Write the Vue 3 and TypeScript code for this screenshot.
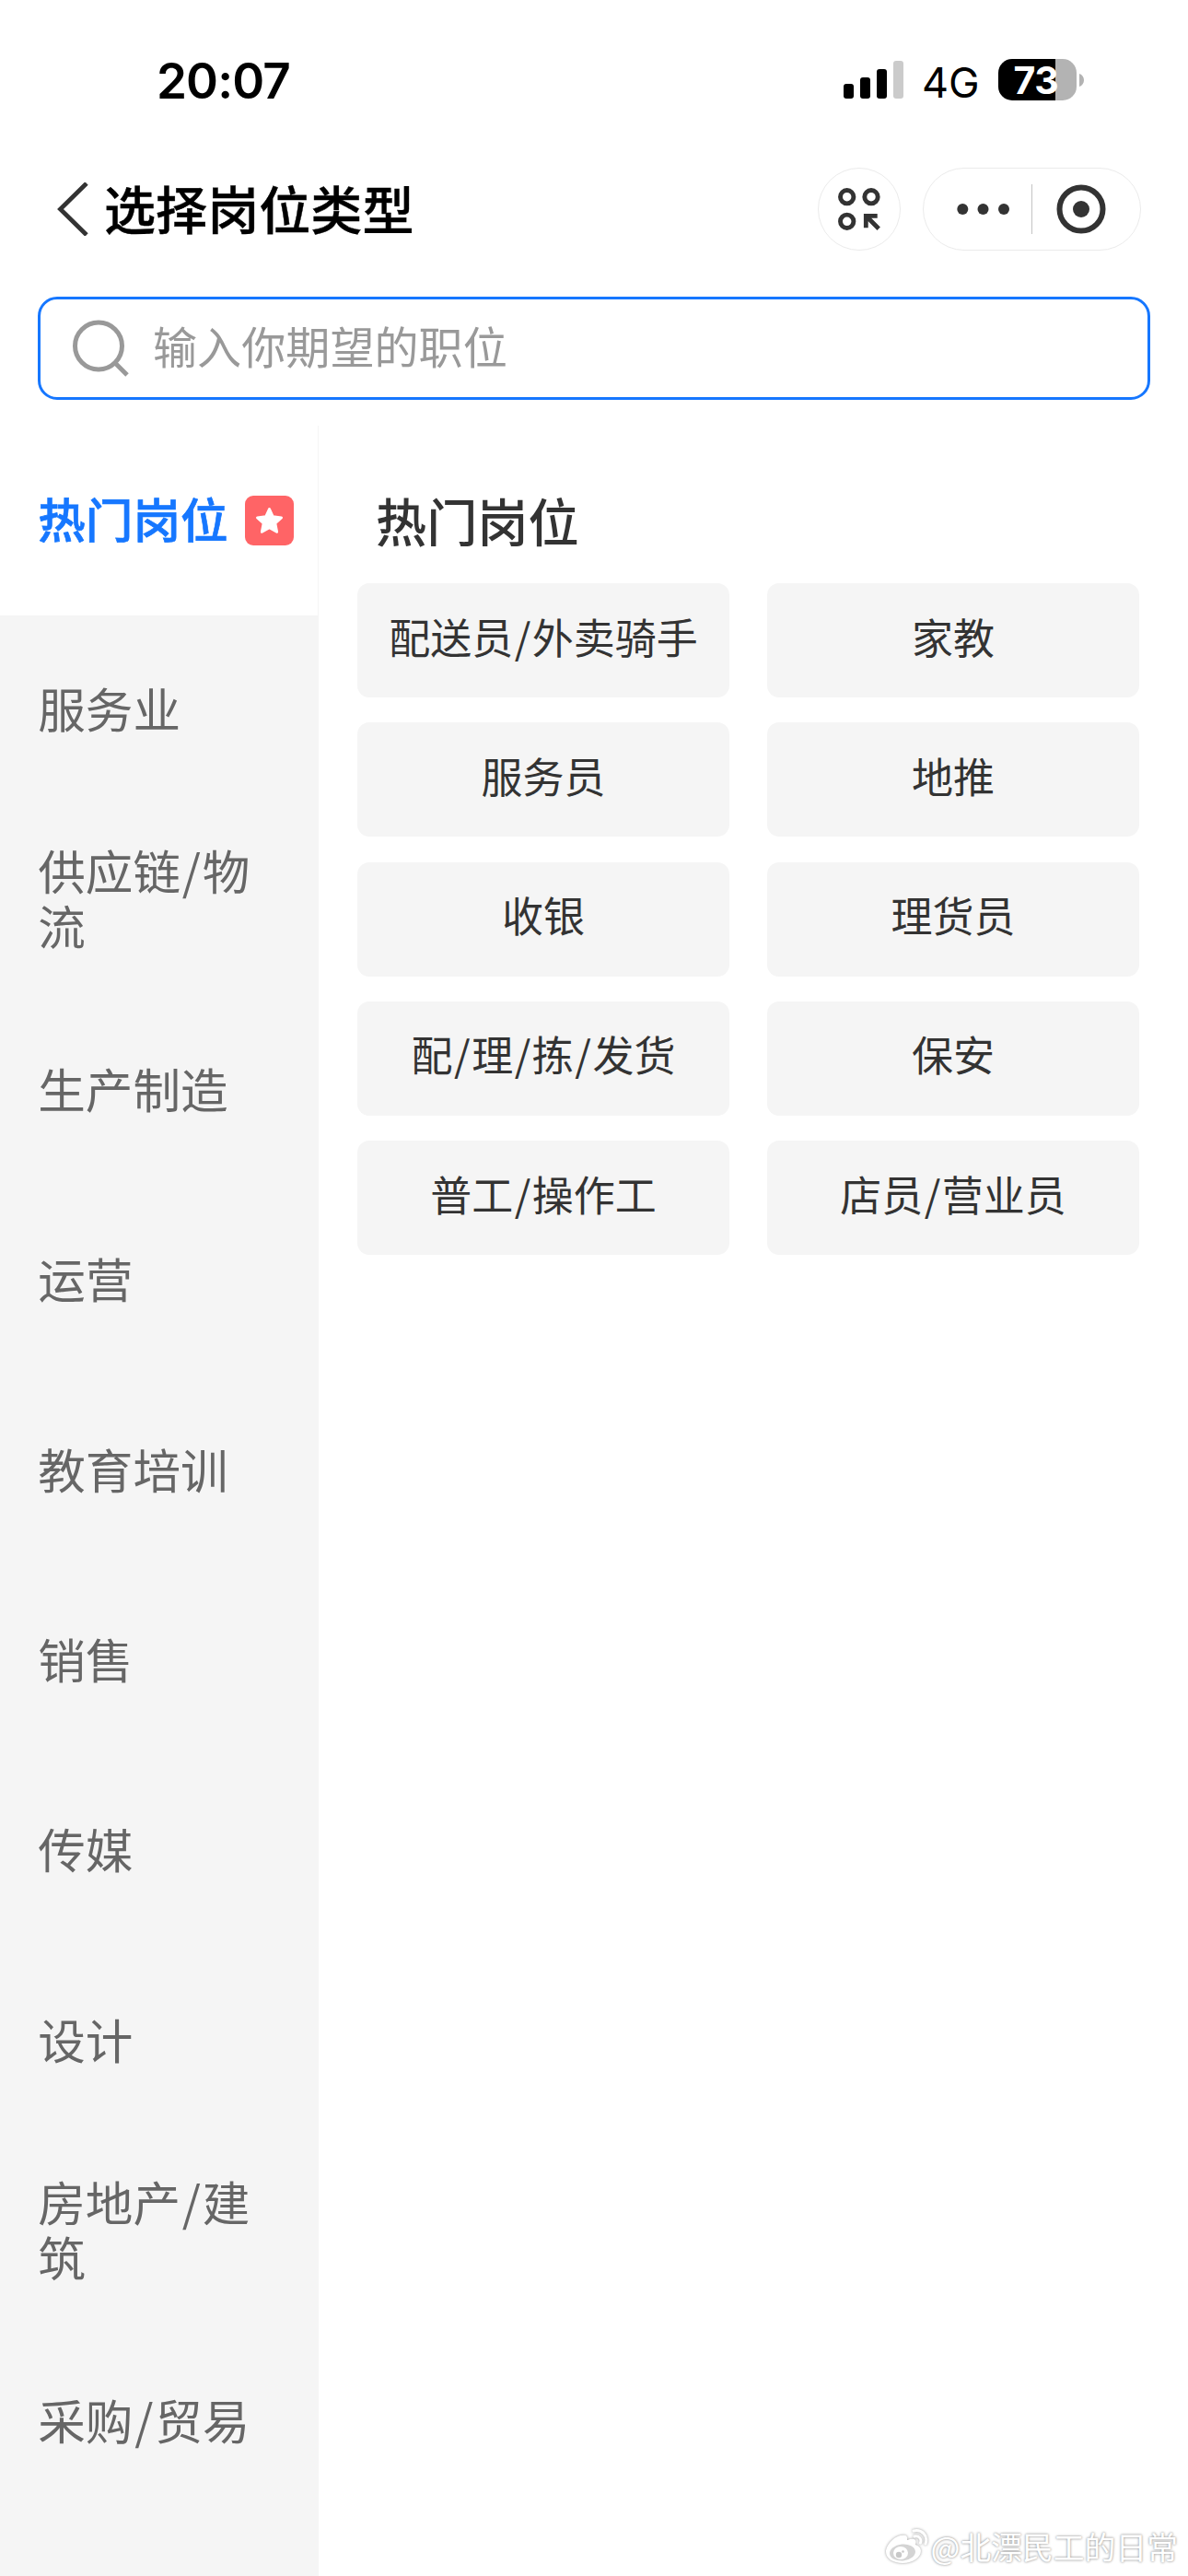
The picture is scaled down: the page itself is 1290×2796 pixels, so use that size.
<script setup lang="ts">
import { ref } from 'vue'

interface Category {
  name: string
  hot?: boolean
}

const categories: Category[] = [
  { name: '热门岗位', hot: true },
  { name: '服务业' },
  { name: '供应链/物流' },
  { name: '生产制造' },
  { name: '运营' },
  { name: '教育培训' },
  { name: '销售' },
  { name: '传媒' },
  { name: '设计' },
  { name: '房地产/建筑' },
  { name: '采购/贸易' },
]

const jobs: string[] = [
  '配送员/外卖骑手',
  '家教',
  '服务员',
  '地推',
  '收银',
  '理货员',
  '配/理/拣/发货',
  '保安',
  '普工/操作工',
  '店员/营业员',
]

const active = ref(0)

// Keeps slashes as separate parts so they can get a little extra room.
const parts = (text: string): string[] => text.split(/(\/)/)
</script>

<template>
  <div class="page">
    <header class="status">
      <span class="time">20:07</span>
      <div class="indicators">
        <svg class="signal" width="65" height="41" viewBox="0 0 65 41">
          <rect x="0" y="25" width="11" height="16" rx="3" />
          <rect x="18" y="18" width="11" height="23" rx="3" />
          <rect x="36" y="9" width="11" height="32" rx="3" />
          <rect x="54" y="0" width="11" height="41" rx="3" fill="#cbcbcb" />
        </svg>
        <span class="network">4G</span>
        <div class="battery">
          <div class="cell"><span>73</span></div>
          <svg width="5" height="14" viewBox="0 0 5 14">
            <path d="M0 0C3.2 1 5 3.700 5 7S3.200 13 0 14Z" fill="#b3b3b3" />
          </svg>
        </div>
      </div>
    </header>

    <nav class="navbar">
      <svg class="back" width="35" height="58" viewBox="0 0 35 58">
        <path d="M33 1L4.500 29L33 57" fill="none" stroke="#333" stroke-width="4.800" />
      </svg>
      <h1>选择岗位类型</h1>
      <div class="round-button">
        <svg width="48" height="48" viewBox="0 0 48 48" fill="none" stroke="#333">
          <circle cx="10.700" cy="10.700" r="7.200" stroke-width="4.900" />
          <circle cx="37" cy="10.700" r="7.200" stroke-width="4.900" />
          <circle cx="10.700" cy="37.300" r="7.200" stroke-width="4.900" />
          <path d="M31.300 44.300V31.300H43.700M31.300 31.300L45.200 45.200" stroke-width="4.800" />
        </svg>
      </div>
      <div class="capsule">
        <svg width="235" height="88" viewBox="0 0 235 88" fill="#333">
          <circle cx="42.300" cy="44" r="6" />
          <circle cx="64.500" cy="44" r="6" />
          <circle cx="87" cy="44" r="6" />
          <rect x="117" y="17" width="1" height="54" fill="#c4c4c4" />
          <circle cx="171" cy="44" r="23.500" fill="none" stroke="#333" stroke-width="6" />
          <circle cx="171" cy="44" r="9" />
        </svg>
      </div>
    </nav>

    <div class="search">
      <svg width="64" height="64" viewBox="0 0 64 64" fill="none" stroke="#999" stroke-width="5">
        <circle cx="30" cy="29.500" r="25.500" />
        <path d="M47 47L61 61" />
      </svg>
      <span>输入你期望的职位</span>
    </div>

    <main class="content">
      <aside class="sidebar">
        <div
          v-for="(category, i) in categories"
          :key="category.name"
          class="category"
          :class="{ active: i === active }"
          @click="active = i"
        >
          <span class="label"
            ><template v-for="(part, p) in parts(category.name)" :key="p"
              ><span v-if="part === '/'" class="slash">/</span
              ><template v-else>{{ part }}</template></template
            ></span
          >
          <svg v-if="category.hot" class="badge" width="53" height="54" viewBox="0 0 53 54">
            <rect width="53" height="54" rx="9" fill="#ff6466" />
            <path
              d="M26.500 14.500L30.300 22.800L39.500 23.900L32.800 30L34.600 39.200L26.500 34.800L18.400 39.200L20.200 30L13.500 23.900L22.700 22.800Z"
              fill="#fff"
              stroke="#fff"
              stroke-width="3"
              stroke-linejoin="round"
            />
          </svg>
        </div>
      </aside>
      <section class="panel">
        <h2>热门岗位</h2>
        <div class="jobs">
          <div v-for="job in jobs" :key="job" class="job">
            <span class="label"
              ><template v-for="(part, p) in parts(job)" :key="p"
                ><span v-if="part === '/'" class="slash">/</span
                ><template v-else>{{ part }}</template></template
              ></span
            >
          </div>
        </div>
      </section>
    </main>

    <div class="watermark">
      <svg width="48" height="40" viewBox="0 0 48 40">
        <path
          d="M18 8C11 8 1 18 1 26C1 33 9 38 19 38C31 38 39 31 39 25C39 21 36 19 33 18C35 13 32 10 24 13C25 9 23 7 18 8Z"
          fill="#fff"
        />
        <ellipse cx="19" cy="26.500" rx="14" ry="9" fill="#d4d4d4" transform="rotate(-6 19 26.500)" />
        <ellipse cx="17" cy="27" rx="8" ry="7" fill="#fff" />
        <circle cx="15" cy="29" r="3.200" fill="#c8c8c8" />
        <circle cx="19.500" cy="25.500" r="1.300" fill="#c8c8c8" />
        <path
          d="M31 3C40 1 47 8 44 17M32 9C37 8 40 12 38.500 16"
          fill="none"
          stroke="#fff"
          stroke-width="3"
          stroke-linecap="round"
        />
      </svg>
      <span>@北漂民工的日常</span>
    </div>
  </div>
</template>

<style>
body {
  margin: 0;
  background: #fff;
}
</style>

<style scoped>
.page {
  position: relative;
  display: flex;
  flex-direction: column;
  box-sizing: border-box;
  width: 1290px;
  height: 2796px;
  overflow: hidden;
  background: #fff;
  color: #333;
  font-family: 'Noto Sans CJK SC', sans-serif;
}

.status {
  display: flex;
  justify-content: space-between;
  box-sizing: border-box;
  height: 182px;
  padding: 64px 113px 0 170px;
  color: #000;
  font-family: Inter, sans-serif;
}

.time {
  height: 48px;
  font-size: 53px;
  font-weight: 600;
  line-height: 48px;
  letter-spacing: -0.9px;
}

.indicators {
  display: flex;
  align-items: flex-start;
}

.signal {
  margin-top: 2px;
}

.network {
  width: 103px;
  padding-left: 20px;
  box-sizing: border-box;
  font-size: 45px;
  font-weight: 400;
  line-height: 51px;
  white-space: nowrap;
}

.battery {
  display: flex;
  align-items: center;
  gap: 3px;
}

.cell {
  display: flex;
  align-items: flex-start;
  justify-content: center;
  width: 85px;
  height: 45px;
  border-radius: 15px;
  background: linear-gradient(to right, #000 62px, #b3b3b3 62px);
  color: #fff;
  font-size: 41px;
  font-weight: 700;
  line-height: 46px;
  letter-spacing: -0.4px;
}

.cell span {
  margin-right: 3px;
}

.navbar {
  display: flex;
  align-items: center;
  height: 90px;
  padding: 0 51px 0 61px;
}

.back {
  margin-right: 17px;
}

h1 {
  flex: 1;
  margin: 0;
  padding-bottom: 4px;
  font-size: 56.1px;
  font-weight: 500;
  line-height: 86px;
  color: #000;
  -webkit-text-stroke: 0.4px #000;
}

.round-button,
.capsule {
  display: flex;
  align-items: center;
  justify-content: center;
  box-sizing: border-box;
  height: 90px;
  border: 1px solid #ebebeb;
  border-radius: 45px;
}

.round-button {
  width: 90px;
  margin-right: 24px;
}

.capsule {
  width: 237px;
}

.search {
  display: flex;
  align-items: center;
  box-sizing: border-box;
  height: 112px;
  margin: 50px 41px 28px;
  padding-left: 33px;
  border: 3px solid #1677ff;
  border-radius: 21px;
  color: #999;
  font-size: 48.100px;
  line-height: 70px;
}

.search span {
  margin-left: 25px;
  padding-bottom: 8px;
}

.content {
  display: flex;
  flex: 1;
}

.sidebar {
  box-sizing: border-box;
  width: 346px;
  border-right: 1px solid #f5f5f5;
  background: #f5f5f5;
}

.category {
  display: flex;
  align-items: center;
  box-sizing: border-box;
  height: 206.4px;
  padding: 0 43px 0 41.200px;
  color: #666;
  font-size: 51.6px;
  line-height: 60.2px;
}

.category .label {
  padding-bottom: 7px;
}

.slash {
  display: inline-block;
  padding: 0 0.034em;
  line-height: 1;
}

.category.active {
  padding-right: 0;
  background: #fff;
  color: #1677ff;
  font-weight: 500;
  -webkit-text-stroke: 0.7px #1677ff;
}

.badge {
  margin-left: 18px;
}

.panel {
  flex: 1;
  padding: 65px 53px 0 42px;
}

h2 {
  margin: 0;
  padding: 0 20px;
  font-size: 55.2px;
  font-weight: 500;
  line-height: 74px;
  height: 106px;
  box-sizing: border-box;
}

.jobs {
  display: grid;
  grid-template-columns: 404px 404px;
  grid-auto-rows: 124px;
  gap: 27.3px 41px;
}

.job {
  display: flex;
  align-items: center;
  justify-content: center;
  border-radius: 13px;
  background: #f5f5f5;
  font-size: 45px;
  line-height: 60px;
}

.job .label {
  padding-bottom: 9px;
}

.watermark {
  position: absolute;
  right: 11px;
  bottom: 9px;
  display: flex;
  align-items: center;
  color: #fff;
  font-size: 33.8px;
  line-height: 46px;
  text-shadow: 0 0 3px #999, 0 0 2px #bbb;
}

.watermark svg {
  margin-right: 1px;
  filter: drop-shadow(0 0 1.500px #999);
}
</style>
